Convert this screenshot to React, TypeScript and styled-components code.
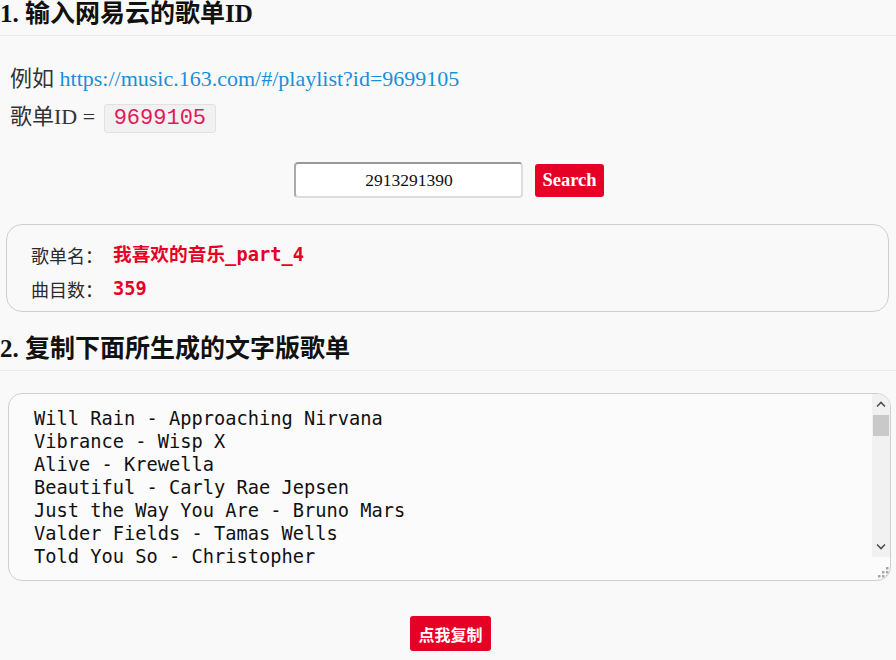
import React from "react";
import styled, { createGlobalStyle } from "styled-components";

const Global = createGlobalStyle`
  html, body { margin: 0; padding: 0; background: #f9f9f9; }
  body { font-family: "Liberation Serif", "Noto Sans CJK SC", serif; color: #222; }
`;

const Page = styled.div`
  display: flex;
  flex-direction: column;
  width: 896px;
  height: 660px;
  overflow: hidden;
`;

const Heading = styled.h2`
  margin: 0;
  padding: 0 0 7px 0;
  font-size: 25px;
  line-height: 28px;
  font-weight: bold;
  color: #111;
  border-bottom: 1px solid #ececec;
`;

const Heading2 = styled(Heading)`
  margin-top: 23px;
`;

const Intro = styled.div`
  display: flex;
  flex-direction: column;
  gap: 10px;
  padding: 29px 0 0 10px;
`;

const Line = styled.p`
  margin: 0;
  font-size: 22px;
  line-height: 28px;
  color: #333;
`;

const Link = styled.a`
  color: #1a8fd8;
  text-decoration: none;
`;

const Code = styled.code`
  display: inline-block;
  vertical-align: middle;
  margin-left: 3px;
  font-family: "Liberation Mono", monospace;
  font-size: 22px;
  color: #e0195c;
  background: #f1f1f1;
  border: 1px solid #e1e1e1;
  border-radius: 3px;
  padding: 0 9px;
  line-height: 27px;
`;

const SearchRow = styled.div`
  display: flex;
  justify-content: center;
  align-items: center;
  gap: 12px;
  padding: 29px 0 26px 2px;
`;

const Input = styled.input`
  box-sizing: border-box;
  width: 229px;
  height: 36px;
  border: 2px solid #ddd;
  border-top-color: #999;
  border-left-color: #aaa;
  border-radius: 4px;
  background: #fff;
  text-align: center;
  font-family: "Liberation Serif", serif;
  font-size: 17.5px;
  color: #111;
  outline: none;
`;

const RedButton = styled.button`
  background: #e60026;
  color: #fff;
  border: none;
  border-radius: 3px;
  font-family: "Liberation Serif", "Noto Sans CJK SC", serif;
  font-weight: bold;
  font-size: 18.5px;
  padding: 0 7px;
  height: 33px;
  cursor: pointer;
`;

const CopyButton = styled(RedButton)`
  height: 35px;
  font-family: "Noto Sans CJK SC", sans-serif;
  font-size: 16px;
  padding: 0 8px;
`;

const Card = styled.div`
  margin: 0 7px 0 6px;
  border: 1px solid #cfcfcf;
  border-radius: 16px;
  padding: 16px 24px 8px 24px;
  display: flex;
  flex-direction: column;
  gap: 6px;
`;

const InfoRow = styled.div`
  display: flex;
  align-items: center;
  font-family: "Noto Sans CJK SC", sans-serif;
  font-size: 18px;
  line-height: 28px;
  color: #2a2a2a;
`;

const Value = styled.span`
  margin-left: 10px;
  font-family: "DejaVu Sans Mono", "Noto Sans CJK SC", monospace;
  font-weight: bold;
  font-size: 18.7px;
  color: #e60026;
`;

const AreaWrap = styled.div`
  padding: 22px 5px 0 8px;
`;

const AreaBox = styled.div`
  box-sizing: border-box;
  display: flex;
  height: 188px;
  border: 1px solid #cfcfcf;
  border-radius: 14px;
  background: #fbfbfb;
  overflow: hidden;
`;

const TextArea = styled.textarea`
  box-sizing: border-box;
  flex: 1;
  height: 174px;
  border: none;
  background: transparent;
  padding: 13px 10px 0 25px;
  font-family: "DejaVu Sans Mono", monospace;
  font-size: 18.7px;
  line-height: 23px;
  color: #111;
  resize: none;
  outline: none;
  overflow: hidden;
  display: block;
`;

const ScrollCol = styled.div`
  width: 18px;
  display: flex;
  flex-direction: column;
`;

const ScrollButton = styled.div`
  height: 21px;
  background: #f1f1f1;
  display: flex;
  align-items: center;
  justify-content: center;
`;

const Track = styled.div`
  flex: 1;
  background: #f1f1f1;
  display: flex;
  flex-direction: column;
`;

const Thumb = styled.div`
  height: 21px;
  margin: 0 1px;
  background: #c9c9c9;
`;

const Corner = styled.div`
  height: 21px;
  display: flex;
  align-items: flex-end;
  justify-content: flex-end;
  padding: 0 1px 2px 0;
`;

const ButtonRow = styled.div`
  display: flex;
  justify-content: center;
  padding: 35px 0 0 5px;
`;

const Chevron = ({ dir }: { dir: "up" | "down" }) => (
  <svg width="10" height="7" viewBox="0 0 10 7">
    <path
      d={dir === "up" ? "M1 5.5 L5 1.5 L9 5.5" : "M1 1.5 L5 5.5 L9 1.5"}
      fill="none"
      stroke="#505050"
      strokeWidth="1.6"
    />
  </svg>
);

const Grip = () => (
  <svg width="12" height="12" viewBox="0 0 12 12">
    <g fill="#a8a8a8">
      <rect x="9" y="1" width="2.5" height="2.5" />
      <rect x="5" y="5" width="2.5" height="2.5" />
      <rect x="9" y="5" width="2.5" height="2.5" />
      <rect x="1" y="9" width="2.5" height="2.5" />
      <rect x="5" y="9" width="2.5" height="2.5" />
      <rect x="9" y="9" width="2.5" height="2.5" />
    </g>
  </svg>
);

const songs = [
  "Will Rain - Approaching Nirvana",
  "Vibrance - Wisp X",
  "Alive - Krewella",
  "Beautiful - Carly Rae Jepsen",
  "Just the Way You Are - Bruno Mars",
  "Valder Fields - Tamas Wells",
  "Told You So - Christopher",
  "Counting Stars - OneRepublic",
  "Wake Me Up - Avicii",
  "Titanium - David Guetta",
  "Paradise - Coldplay",
  "Safe and Sound - Capital Cities",
  "Stay - Zedd",
  "Apologize - Timbaland",
  "Viva La Vida - Coldplay",
].join("\n");

export default function App() {
  return (
    <Page>
      <Global />
      <Heading>1. 输入网易云的歌单ID</Heading>
      <Intro>
        <Line>
          例如 <Link href="#">https://music.163.com/#/playlist?id=9699105</Link>
        </Line>
        <Line>
          歌单ID = <Code>9699105</Code>
        </Line>
      </Intro>
      <SearchRow>
        <Input defaultValue="2913291390" />
        <RedButton>Search</RedButton>
      </SearchRow>
      <Card>
        <InfoRow>
          歌单名：<Value>我喜欢的音乐_part_4</Value>
        </InfoRow>
        <InfoRow>
          曲目数：<Value>359</Value>
        </InfoRow>
      </Card>
      <Heading2>2. 复制下面所生成的文字版歌单</Heading2>
      <AreaWrap>
        <AreaBox>
          <TextArea readOnly defaultValue={songs} spellCheck={false} />
          <ScrollCol>
            <ScrollButton>
              <Chevron dir="up" />
            </ScrollButton>
            <Track>
              <Thumb />
            </Track>
            <ScrollButton>
              <Chevron dir="down" />
            </ScrollButton>
            <Corner>
              <Grip />
            </Corner>
          </ScrollCol>
        </AreaBox>
      </AreaWrap>
      <ButtonRow>
        <CopyButton>点我复制</CopyButton>
      </ButtonRow>
    </Page>
  );
}
